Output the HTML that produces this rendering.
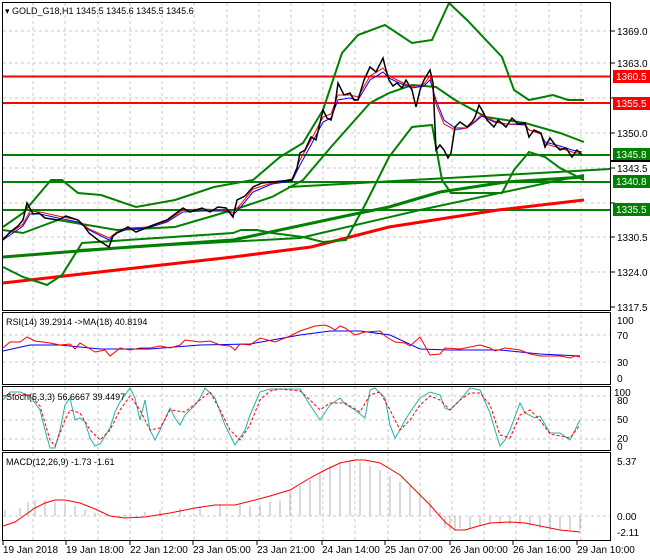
<!DOCTYPE html>
<html><head><meta charset="utf-8"><style>
body{margin:0;background:#fff;width:650px;height:560px;overflow:hidden}
svg{display:block;font-family:"Liberation Sans",sans-serif;font-size:10px}
.lg{font-size:9px}
</style></head><body>
<svg width="650" height="560" viewBox="0 0 650 560">
<rect width="650" height="560" fill="#fff"/>
<g stroke="#c8c8c8" stroke-dasharray="3,3" stroke-width="1">
<path d="M33 3V540M65 3V540M98 3V540M130 3V540M162 3V540M194 3V540M227 3V540M259 3V540M291 3V540M323 3V540M355 3V540M388 3V540M420 3V540M452 3V540M484 3V540M516 3V540M549 3V540M581 3V540"/>
<path d="M3 31H610M3 63H610M3 98H610M3 133H610M3 168H610M3 203H610M3 237H610M3 272H610M3 335H610M3 362H610M3 396H610M3 420H610M3 439H610M3 516H610"/>
</g>
<g fill="none">
<path d="M3 76.5H610" stroke="#f00" stroke-width="2"/>
<path d="M3 103H610" stroke="#f00" stroke-width="2"/>
<path d="M3 155H610M3 182H610M3 210H610" stroke="#008000" stroke-width="2"/>
<path d="M3 283L117 270L233 257L311 247L389 227L498 210L584 200" stroke="#f00" stroke-width="3"/>
<path d="M3 257L117 248L233 240L350 215L389 207L440 192L506 182L584 177" stroke="#008000" stroke-width="3"/>
<path d="M288 187L610 169" stroke="#008000" stroke-width="2"/>
<path d="M78 250L300 238L420 210L584 175" stroke="#008000" stroke-width="2"/>
<path d="M3 227L23 213L51 180L62 180L78 193L101 195L136 207L175 200L214 187L253 180L280 157L303 143L323 110L342 53L358 35L385 25L412 43L432 40L449 3L467 20L502 57L514 90L529 100L553 95L568 100L584 100" stroke="#008000" stroke-width="2"/>
<path d="M3 230L23 233L58 220L117 230L175 227L233 210L272 197L303 180L331 147L370 103L389 93L412 85L436 87L455 100L486 117L525 123L560 133L584 142" stroke="#008000" stroke-width="2"/>
<path d="M3 267L23 277L47 285L62 275L82 243L233 233L241 230L257 230L272 233L303 237L323 242L346 240L366 203L389 157L412 127L432 125L442 180L451 193L502 193L514 170L529 152L545 157L560 168L584 180" stroke="#008000" stroke-width="2"/>
<path d="M3 240L23 226L30 214L40 214L58 218L78 222L89 230L109 240L117 233L128 229L148 228L167 222L183 212L202 211L226 211L233 215L240 208L253 192L272 184L292 181L300 165L311 145L323 122L331 118L338 100L350 98L358 100L370 80L383 72L389 78L397 82L412 88L424 86L430 80L436 100L444 120L455 128L467 128L475 122L482 116L494 122L506 124L525 125L529 130L541 134L545 142L560 146L572 150L582 152" stroke="#00f" stroke-width="1"/>
<path d="M3 238L23 224L30 211L40 212L58 216L78 220L89 229L109 238L117 232L128 228L148 227L167 221L183 210L202 209L226 210L233 213L240 205L253 189L272 183L292 179L300 160L311 140L323 117L331 114L338 95L350 95L358 97L370 76L383 68L389 76L397 80L412 87L424 84L430 76L436 104L444 124L455 130L467 128L475 121L482 114L494 121L506 124L525 124L529 130L541 134L545 144L560 148L572 152L582 154" stroke="#f00" stroke-width="1"/>
<path d="M3 240L10 232L18 226L23 220L27 203L33 214L39 213L45 218L58 220L66 216L78 220L84 226L89 233L98 240L109 247L113 236L117 233L122 230L128 227L136 232L148 227L156 224L167 220L175 214L183 208L190 212L202 208L210 212L218 207L226 208L233 217L237 200L245 196L253 187L262 183L272 182L282 181L292 180L297 168L300 153L305 150L311 137L316 140L323 110L327 118L331 120L335 105L338 83L344 95L350 93L354 100L358 100L364 80L370 67L376 72L383 58L386 70L389 80L393 86L397 83L402 88L406 80L412 90L416 107L420 90L424 80L430 70L433 83L436 150L440 145L444 150L448 158L451 153L455 127L460 122L467 127L472 122L475 117L479 105L482 110L487 120L494 127L498 120L506 127L512 118L518 124L525 123L529 137L534 130L541 133L545 147L550 138L556 146L560 150L566 148L572 157L577 150L582 155" stroke="#000" stroke-width="1.5"/>
</g>
<rect x="2.5" y="2.5" width="608" height="308" fill="none" stroke="#000"/>
<text x="5" y="14" class="lg" fill="#000">▾ GOLD_G18,H1  1345.5 1345.6 1345.5 1345.6</text>
<g fill="#000"><path d="M611 31h4M611 63h4M611 98h4M611 133h4M611 168h4M611 203h4M611 237h4M611 272h4M611 307h4" stroke="#000"/>
<text x="617" y="35">1369.0</text><text x="617" y="67">1363.0</text><text x="617" y="137">1350.0</text><text x="617" y="172">1343.5</text><text x="617" y="241">1330.5</text><text x="617" y="276">1324.0</text><text x="617" y="311">1317.5</text></g>
<rect x="613" y="70" width="37" height="13" fill="#f00"/><text x="616" y="80" fill="#fff">1360.5</text>
<rect x="613" y="97" width="37" height="13" fill="#f00"/><text x="616" y="107" fill="#fff">1355.5</text>
<rect x="613" y="148" width="37" height="13" fill="#008000"/><text x="616" y="158" fill="#fff">1345.8</text>
<rect x="613" y="175" width="37" height="13" fill="#008000"/><text x="616" y="185" fill="#fff">1340.8</text>
<rect x="613" y="203" width="37" height="13" fill="#008000"/><text x="616" y="213" fill="#fff">1335.5</text>
<path d="M610 161H650" stroke="#000" stroke-width="2"/>
<rect x="2.5" y="312.5" width="608" height="72" fill="none" stroke="#000"/>
<text x="6" y="325" class="lg">RSI(14) 39.2914   -&gt;MA(18) 40.8194</text>
<g fill="none" stroke-width="1">
<path d="M3 351L30 345L60 345L100 349L150 349L200 345L250 344L300 335L330 331L360 331L390 335L420 349L450 350L500 350L540 354L580 356" stroke="#00f"/>
<path d="M3 348L10 342L20 342L27 337L35 341L50 343L60 345L70 344L75 349L80 343L95 352L105 350L110 356L120 348L130 350L140 348L150 348L160 346L170 348L180 345L185 340L200 342L210 341L220 345L230 346L235 350L240 344L250 345L260 338L275 342L290 336L300 331L315 326L325 325L330 327L335 330L340 326L345 328L355 335L365 332L380 331L385 336L395 342L405 343L410 346L420 337L430 355L440 354L445 348L460 349L480 345L490 348L495 351L505 348L520 350L530 354L540 356L560 356L570 358L575 356L580 357" stroke="#f00"/>
</g>
<text x="617" y="324">100</text><text x="617" y="339">70</text><text x="617" y="366">30</text><text x="617" y="382">0</text>
<rect x="2.5" y="386.5" width="608" height="64" fill="none" stroke="#000"/>
<g fill="none" stroke-width="1">
<path d="M3 400L10 392L20 392L30 396L40 410L45 430L50 448L55 448L60 430L65 405L70 398L75 420L80 418L85 422L90 438L95 446L100 444L110 428L115 412L120 402L130 388L135 398L140 420L145 400L150 430L155 440L160 430L170 408L175 418L180 425L185 415L195 405L200 398L205 388L215 398L225 425L230 435L235 445L245 430L250 415L260 392L270 389L280 389L290 389L300 389L310 405L320 420L330 405L340 398L345 404L355 410L365 418L370 390L375 388L385 398L390 425L395 438L400 430L405 420L415 405L420 398L430 392L440 395L445 408L450 410L460 400L470 388L480 390L490 413L495 430L500 446L505 440L510 430L520 403L525 413L535 418L540 416L550 433L560 433L570 440L580 420" stroke="#20b2aa"/>
<path d="M3 396L15 394L30 395L40 406L50 440L55 446L65 420L70 410L80 413L90 430L100 440L110 430L120 410L130 396L140 410L150 430L160 428L170 410L185 412L200 400L210 392L220 410L230 430L240 440L250 425L260 400L270 391L280 389L300 391L310 400L320 410L330 403L345 403L360 412L370 395L380 392L390 410L400 430L410 420L420 405L430 396L440 400L450 410L460 400L470 393L480 393L490 405L500 435L510 438L520 415L530 410L540 420L550 434L570 438L580 425" stroke="#f00" stroke-dasharray="3,2"/>
</g>
<text x="6" y="400" class="lg">Stoch(5,3,3) 56.6667 39.4497</text>
<text x="614" y="396">100</text><text x="617" y="404">80</text><text x="617" y="423">50</text><text x="617" y="442">20</text><text x="617" y="450">0</text>
<rect x="2.5" y="452.5" width="608" height="88" fill="none" stroke="#000"/>
<g stroke="#b4b4b4" stroke-width="1">
<path d="M5 516v-6M20 516v-8M28 516v-14M35 516v-16M45 516v-16M55 516v-14M65 516v-12M75 516v-10M85 516v-6M95 516v-3M105 516v-1M125 516v-1M145 516v-4M160 516v-6M180 516v-8M200 516v-10M220 516v-12M240 516v-12M250 516v-10M260 516v-11M270 516v-14M280 516v-16M290 516v-24M300 516v-30M310 516v-36M320 516v-42M330 516v-50M340 516v-54M350 516v-56M360 516v-54M370 516v-50M380 516v-46M390 516v-40M400 516v-34M410 516v-30M420 516v-26M430 516v-16M440 516v-4M445 516v12M450 516v14M455 516v14M460 516v12M470 516v12M480 516v10M490 516v8M500 516v8M510 516v8M520 516v8M530 516v10M540 516v12M550 516v14M560 516v14M570 516v14M580 516v14"/>
</g>
<path d="M3 526L15 522L25 515L35 508L45 503L55 500L65 500L80 503L95 509L110 516L125 518L145 517L170 513L195 508L215 505L235 505L255 500L270 496L290 490L310 478L325 470L340 463L355 460L365 460L380 463L400 475L415 490L430 505L445 522L455 530L465 530L475 527L490 523L510 522L525 523L540 526L560 530L580 532" fill="none" stroke="#f00" stroke-width="1"/>
<text x="6" y="465" class="lg">MACD(12,26,9) -1.73 -1.61</text>
<text x="617" y="465">5.37</text><text x="617" y="520">0.00</text><text x="617" y="536">-2.11</text>
<g fill="#000"><path d="M3 541v4M66 541v4M130 541v4M193 541v4M257 541v4M322 541v4M385 541v4M450 541v4M513 541v4M577 541v4" stroke="#000"/>
<text x="3" y="553">19 Jan 2018</text><text x="66" y="553">19 Jan 18:00</text><text x="130" y="553">22 Jan 12:00</text><text x="193" y="553">23 Jan 05:00</text><text x="257" y="553">23 Jan 21:00</text><text x="322" y="553">24 Jan 14:00</text><text x="385" y="553">25 Jan 07:00</text><text x="450" y="553">26 Jan 00:00</text><text x="513" y="553">26 Jan 16:00</text><text x="577" y="553">29 Jan 10:00</text></g>
</svg>
</body></html>
